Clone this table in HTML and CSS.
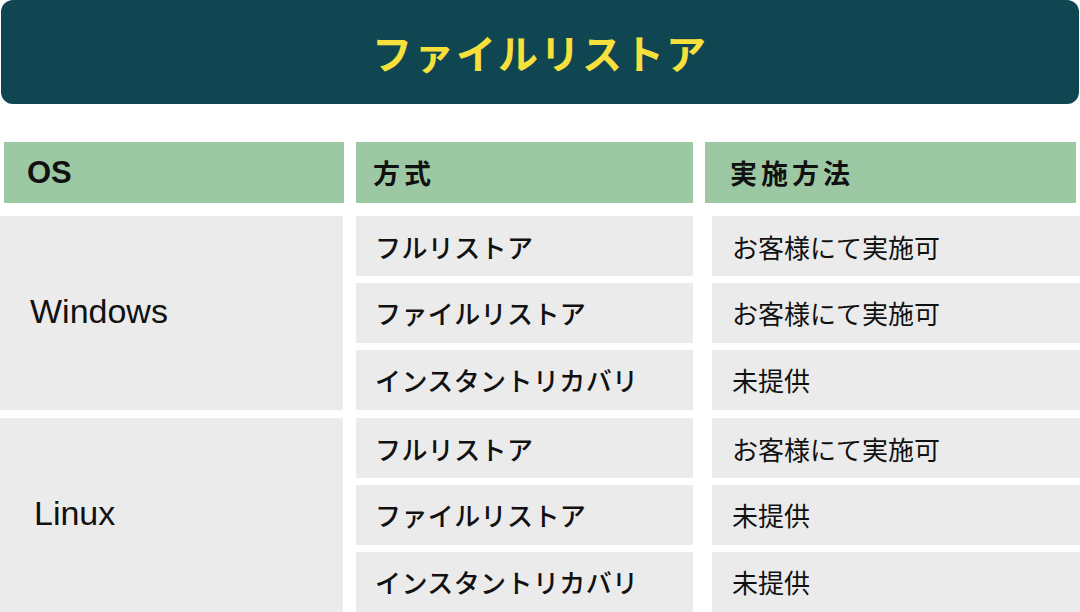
FILE: index.html
```html
<!DOCTYPE html>
<html lang="ja">
<head>
<meta charset="utf-8">
<link rel="stylesheet" href="styles.css">
</head>
<body>
<div class="page">
  <div class="banner"><span class="title">ファイルリストア</span></div>
  <div class="head">
    <div class="hcell hc1"><span class="lat">OS</span></div>
    <div class="hcell hc2">方式</div>
    <div class="hcell hc3">実施方法</div>
  </div>
  <div class="body">
    <div class="group">
      <div class="os">Windows</div>
      <div class="rows">
        <div class="row"><div class="m">フルリストア</div><div class="h">お客様にて実施可</div></div>
        <div class="row"><div class="m">ファイルリストア</div><div class="h">お客様にて実施可</div></div>
        <div class="row"><div class="m">インスタントリカバリ</div><div class="h">未提供</div></div>
      </div>
    </div>
    <div class="group">
      <div class="os os-linux">Linux</div>
      <div class="rows">
        <div class="row"><div class="m">フルリストア</div><div class="h">お客様にて実施可</div></div>
        <div class="row"><div class="m">ファイルリストア</div><div class="h">未提供</div></div>
        <div class="row"><div class="m">インスタントリカバリ</div><div class="h">未提供</div></div>
      </div>
    </div>
  </div>
</div>
</body>
</html>
```

FILE: styles.css
```css
html, body {
  margin: 0;
  padding: 0;
  background: #ffffff;
}
body {
  width: 1080px;
  height: 612px;
  overflow: hidden;
  font-family: "Noto Sans CJK JP", "Noto Sans", sans-serif;
  color: #111111;
}
.page {
  display: flex;
  flex-direction: column;
}
.banner {
  margin: 0 1px;
  height: 104px;
  background: #0f4652;
  border-radius: 12px;
  display: flex;
  align-items: center;
  justify-content: center;
}
.title {
  color: #f7e03c;
  font-size: 40px;
  font-weight: 700;
  letter-spacing: 2px;
  line-height: 1;
}
.head {
  margin-top: 38px;
  height: 61px;
  display: flex;
  padding-left: 4px;
}
.hcell {
  background: #9cc8a3;
  display: flex;
  align-items: center;
  font-size: 27px;
  font-weight: 700;
  letter-spacing: 4px;
}
.hc1 { width: 340px; padding-left: 23px; box-sizing: border-box; }
.hc2 { width: 337px; margin-left: 12px; padding-left: 17px; box-sizing: border-box; }
.hc3 { width: 371px; margin-left: 12px; padding-left: 25px; box-sizing: border-box; }
.lat {
  font-family: "Liberation Sans", Arial, sans-serif;
  font-size: 31px;
  font-weight: 700;
  letter-spacing: 0;
}
.body {
  margin-top: 13px;
  display: flex;
  flex-direction: column;
  gap: 8px;
}
.group {
  height: 194px;
  display: flex;
}
.os {
  width: 343px;
  background: #ebebeb;
  display: flex;
  align-items: center;
  padding-left: 30px;
  padding-bottom: 4px;
  box-sizing: border-box;
  font-family: "Liberation Sans", Arial, sans-serif;
  font-size: 34px;
}
.os-linux {
  padding-left: 34px;
}
.rows {
  flex: 1;
  display: flex;
  flex-direction: column;
  gap: 6.5px;
}
.row {
  flex: 1;
  display: flex;
}
.m, .h {
  background: #ebebeb;
  display: flex;
  align-items: center;
  font-size: 26px;
  box-sizing: border-box;
}
.m {
  width: 337px;
  margin-left: 13px;
  padding-left: 19px;
  font-weight: 500;
  letter-spacing: 0.4px;
}
.h {
  flex: 1;
  margin-left: 19px;
  padding-left: 20px;
}
```
